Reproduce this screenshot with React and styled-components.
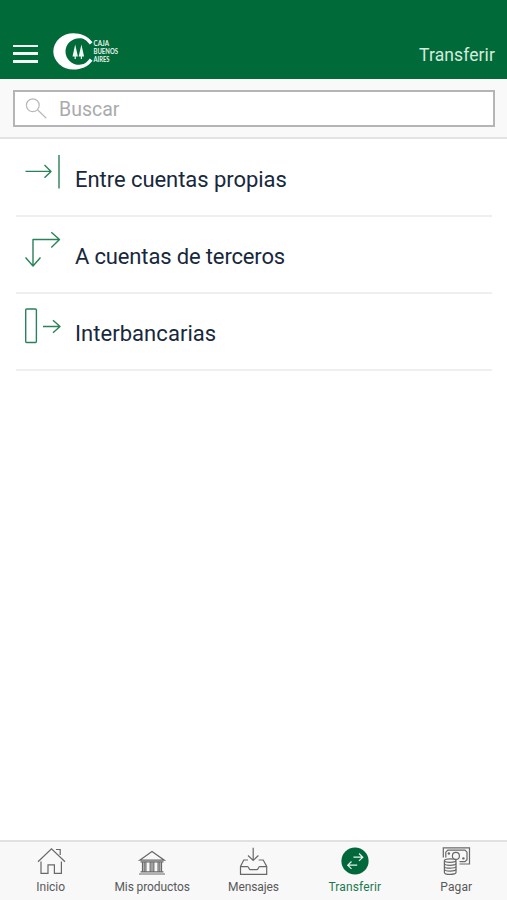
import React from 'react'
import styled, { createGlobalStyle } from 'styled-components'

const GlobalStyle = createGlobalStyle`
    * {
        box-sizing: border-box;
    }
    body {
        margin: 0;
        background: #ffffff;
        font-family: Roboto, "Liberation Sans", sans-serif;
    }
`
const Screen = styled.div`
    display: flex;
    flex-direction: column;
    height: 900px;
    overflow: hidden;
`
const Header = styled.header`
    display: flex;
    flex-shrink: 0;
    align-items: center;
    height: 79px;
    padding: 28px 12px 0 13px;
    background: #006a39;
`
const MenuButton = styled.button`
    display: flex;
    flex-direction: column;
    justify-content: space-between;
    width: 25px;
    height: 18px;
    margin-right: 14px;
    padding: 0;
    border: none;
    background: none;
`
const MenuLine = styled.span`
    height: 2.5px;
    background: #f4faf6;
`
const LogoBox = styled.div`
    height: 40px;
    margin-top: -4px;
`
const HeaderTitle = styled.h1`
    margin: 3px 0 0 auto;
    color: #d5ebdd;
    font-size: 17.5px;
    font-weight: 400;
    line-height: 22px;
    letter-spacing: ${props => props.$spacing};
`
const SearchBar = styled.div`
    flex-shrink: 0;
    height: 60px;
    padding: 11px 12px 0 13px;
    border-bottom: 2px solid #e3e3e3;
    background: #f9f9f9;
`
const SearchField = styled.label`
    display: flex;
    align-items: center;
    height: 37px;
    padding-left: 9px;
    border: 2px solid #b5b5b7;
    background: #ffffff;
`
const SearchInput = styled.input`
    flex: 1;
    min-width: 0;
    margin-left: 11px;
    padding: 2px 0 0;
    border: none;
    outline: none;
    background: none;
    font-family: inherit;
    font-size: 19.5px;
    letter-spacing: 0;
    &::placeholder {
        color: #a9abad;
        opacity: 1;
    }
`
const List = styled.ul`
    flex: 1;
    margin: 0;
    padding: 1px 15px 0 16px;
    list-style: none;
`
const ListItem = styled.li`
    display: flex;
    height: 77px;
    padding: 10px 0 0 6px;
    border-bottom: 2px solid #efefef;
`
const ItemText = styled.span`
    margin: 16px 0 0 13px;
    color: #17283d;
    font-size: 22px;
    line-height: 28px;
    letter-spacing: ${props => props.$spacing};
    white-space: nowrap;
`
const TabBar = styled.nav`
    display: grid;
    flex-shrink: 0;
    grid-template-columns: repeat(5, 1fr);
    height: 60px;
    border-top: 2px solid #e1e1e1;
    background: #f8f8f8;
`
const Tab = styled.div`
    display: flex;
    flex-direction: column;
    align-items: center;
    padding-top: 4px;
    color: ${props => (props.$active ? '#1b7a50' : '#58585a')};
`
const TabLabel = styled.span`
    margin-top: 3px;
    font-size: 12px;
    line-height: 16px;
    letter-spacing: ${props => props.$spacing};
    white-space: nowrap;
`
const LogoText = styled.text`
    font-family: Lato, "Liberation Sans", sans-serif;
    font-size: 7px;
    font-weight: 700;
    fill: #e9f5ee;
`

const Logo = () => (
    <LogoBox>
        <svg width="80" height="40" viewBox="0 0 80 40">
            <path d="M40.5 10.2 C36 4.2 29 1.2 21.5 1.2 A20.2 18.2 0 0 0 21.5 37.6 C29 37.6 36 34.8 40.5 28.8 L37.8 26.6 C34.5 31 31.5 32.8 27.5 32.8 A14 13.3 0 0 1 27.5 6.2 C31.5 6.2 34.5 8 37.8 12.4 Z" fill="#fff" />
            <path d="M23.2 12.5 l2.7 12 h-5.4 z M29.4 12.5 l2.7 12 h-5.4 z M22.6 24h1.2v3h-1.2z M28.8 24h1.2v3h-1.2z" fill="#f1faf4" />
            <LogoText x="41.5" y="14.4" textLength="15.5" lengthAdjust="spacingAndGlyphs">CAJA</LogoText>
            <LogoText x="41.5" y="22.4" textLength="24.5" lengthAdjust="spacingAndGlyphs">BUENOS</LogoText>
            <LogoText x="41.5" y="30.4" textLength="16" lengthAdjust="spacingAndGlyphs">AIRES</LogoText>
        </svg>
    </LogoBox>
)

const SearchIcon = () => (
    <svg width="24" height="24" viewBox="0 0 24 24" fill="none" stroke="#b9b9b9" strokeWidth="1.2">
        <circle cx="8.8" cy="8.3" r="6.4" />
        <path d="M13.5 12.8 L22.3 21.2" />
    </svg>
)

// 40x40 line icons of the transfer types
const TransferIcon = ({ d }) => (
    <svg width="40" height="40" viewBox="0 0 40 40" fill="none" stroke="#2a8259" strokeWidth="1.4">
        <path d={d} strokeLinejoin="round" />
    </svg>
)

const TabIcon = ({ children }) => (
    <svg width="30" height="30" viewBox="0 0 30 30" fill="none" stroke="#68686a" strokeWidth="1.2">
        {children}
    </svg>
)

const HomeIcon = () => (
    <TabIcon>
        <path d="M2 15.7 L15.5 2.8 L29 15.7 M20 3.5 H24.2 V9 M5 15.5 V27.3 H12 V18.8 H18.4 V27.3 H25.4 V15.5" />
    </TabIcon>
)

const BankIcon = () => (
    <TabIcon>
        <path d="M2.7 14.2 L15 5.6 L27.3 14.2 Z M3.5 15.8 H26.5 M3.5 25.8 H26.5 M2 28 H28" />
        <path d="M5.5 16 V26 M7.2 16 V26 M8.9 16 V26 M13.2 16 V26 M15 16 V26 M16.8 16 V26 M21.1 16 V26 M22.8 16 V26 M24.5 16 V26" />
    </TabIcon>
)

const InboxIcon = () => (
    <TabIcon>
        <path d="M15.2 1.8 V14.2 M10 9.5 L15.2 14.4 L20.4 9.5" />
        <path d="M10 14 H5.8 L2.5 20.5 V28.3 H28.7 V20.5 L25.2 14 H20.6" />
        <path d="M2.5 20.7 H9.5 C11 20.7 10.8 23.7 12.3 23.7 H18.9 C20.4 23.7 20.2 20.7 21.7 20.7 H28.7" />
    </TabIcon>
)

const SwapIcon = () => (
    <TabIcon>
        <circle cx="15" cy="15" r="13.6" fill="#00683a" stroke="none" />
        <path d="M13.4 11.2 H22.7 M19 7.5 L22.8 11.2 L19 14.9 M17.2 19.2 H7.8 M11.5 15.5 L7.7 19.2 L11.5 22.9" stroke="#e6f4eb" />
    </TabIcon>
)

const MoneyIcon = () => (
    <TabIcon>
        <path d="M2.3 11.5 V1.8 H28.5 V18 H18.5 M4.8 11.5 V6.2 L6.8 4.2 H24 L26 6.2 V13.7 L24 15.7 H18.5" />
        <circle cx="14.9" cy="9.9" r="3.5" />
        <circle cx="7.9" cy="7.5" r="1.2" fill="#68686a" stroke="none" />
        <circle cx="22.4" cy="12.4" r="1.2" fill="#68686a" stroke="none" />
        <path d="M3.4 14.6 V26.4 C3.4 29 15 29 15 26.4 V14.6 C15 12.2 3.4 12.2 3.4 14.6 C3.4 17 15 17 15 14.6" fill="#f8f8f8" />
        <path d="M3.4 17.5 C3.4 19.9 15 19.9 15 17.5 M3.4 20.4 C3.4 22.8 15 22.8 15 20.4 M3.4 23.3 C3.4 25.7 15 25.7 15 23.3" />
    </TabIcon>
)

const transfers = [
    {
        id: 1,
        name: 'Entre cuentas propias',
        spacing: '-0.05px',
        icon: 'M3.5 21.4 H29 M22.5 15 L29 21.4 L22.5 27.8 M37 5 V38.5',
    },
    {
        id: 2,
        name: 'A cuentas de terceros',
        spacing: '-0.15px',
        icon: 'M11 39 V12.5 H37.5 M29.3 5.3 L37.5 12.5 L29.3 20.5 M3.5 30.5 L11 39 L18.5 30.5',
    },
    {
        id: 3,
        name: 'Interbancarias',
        spacing: '0.05px',
        icon: 'M4.7 5 H13.4 Q14.4 5 14.4 6 V37.5 Q14.4 38.5 13.4 38.5 H4.7 Q3.7 38.5 3.7 37.5 V6 Q3.7 5 4.7 5 Z M21 22.5 H38 M31 16.2 L38 22.5 L31 28.8',
    },
]

const tabs = [
    { name: 'Inicio', Icon: HomeIcon, spacing: '0' },
    { name: 'Mis productos', Icon: BankIcon, spacing: '-0.1px' },
    { name: 'Mensajes', Icon: InboxIcon, spacing: '-0.1px' },
    { name: 'Transferir', Icon: SwapIcon, spacing: '0.15px', active: true },
    { name: 'Pagar', Icon: MoneyIcon, spacing: '0.1px' },
]

const App = () => {
    return (
        <>
            <GlobalStyle />
            <Screen>
                <Header>
                    <MenuButton aria-label="Menu">
                        <MenuLine />
                        <MenuLine />
                        <MenuLine />
                    </MenuButton>
                    <Logo />
                    <HeaderTitle $spacing="0.1px">Transferir</HeaderTitle>
                </Header>
                <SearchBar>
                    <SearchField>
                        <SearchIcon />
                        <SearchInput placeholder="Buscar" />
                    </SearchField>
                </SearchBar>
                <List>
                    {transfers.map((item) => (
                        <ListItem key={item.id}>
                            <TransferIcon d={item.icon} />
                            <ItemText $spacing={item.spacing}>{item.name}</ItemText>
                        </ListItem>
                    ))}
                </List>
                <TabBar>
                    {tabs.map(({ name, Icon, spacing, active }) => (
                        <Tab key={name} $active={active}>
                            <Icon />
                            <TabLabel $spacing={spacing}>{name}</TabLabel>
                        </Tab>
                    ))}
                </TabBar>
            </Screen>
        </>
    )
}

export default App
